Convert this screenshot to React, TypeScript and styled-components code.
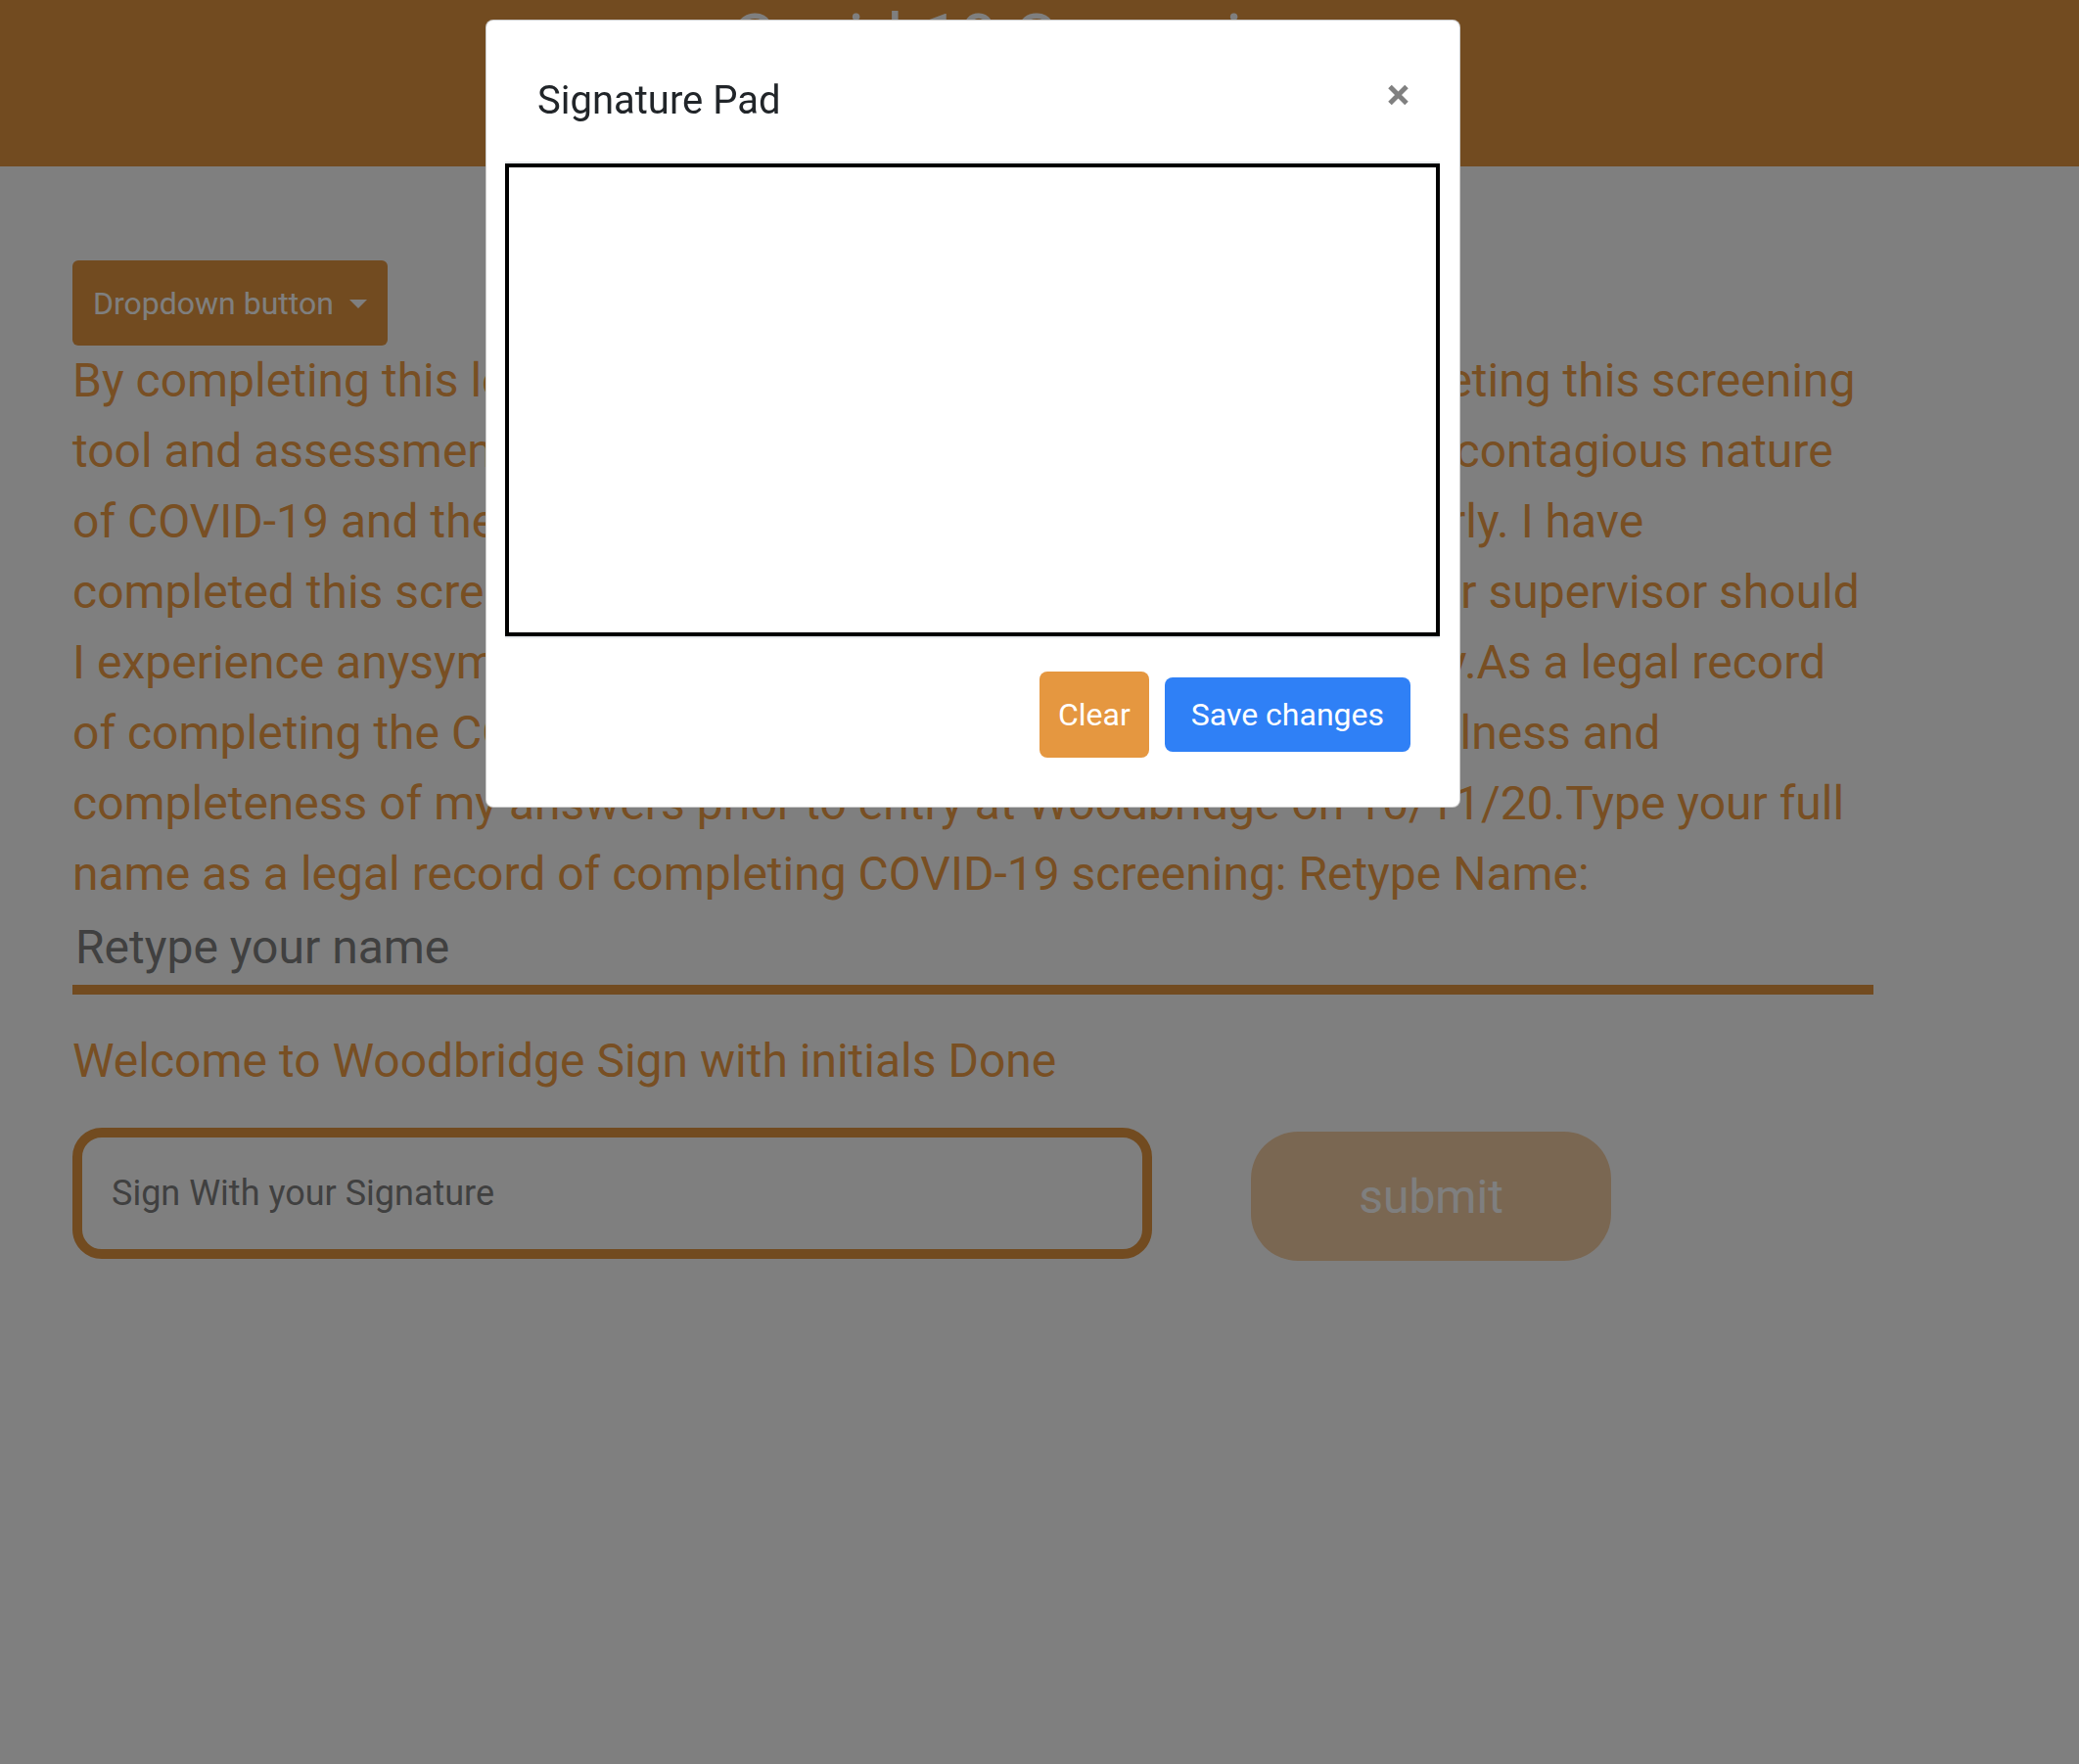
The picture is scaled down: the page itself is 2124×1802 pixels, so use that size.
import React from "react";
import styled, { createGlobalStyle } from "styled-components";

const ORANGE = "#e59740";
const TEXT_ORANGE = "#f09e47";

const GlobalStyle = createGlobalStyle`
  *, *::before, *::after { box-sizing: border-box; }
  html, body { margin: 0; padding: 0; background: #ffffff; }
  body { font-family: Roboto, "Liberation Sans", Arial, sans-serif; }
`;

const Page = styled.div`
  width: 100%;
  min-height: 1802px;
  background: #ffffff;
`;

const Header = styled.header`
  height: 170px;
  background: ${ORANGE};
  display: flex;
  justify-content: center;
  align-items: flex-start;
  padding-right: 30px;
`;

const HeaderTitle = styled.h1`
  margin: 0;
  font-size: 70px;
  line-height: 1.15;
  font-weight: 400;
  color: #ffffff;
`;

const Content = styled.main`
  width: 1840px;
  margin-left: 74px;
  padding-top: 96px;
  display: flex;
  flex-direction: column;
  align-items: flex-start;
`;

const DropdownButton = styled.button`
  height: 87px;
  padding: 0 21px;
  border: 0;
  border-radius: 6px;
  background: ${ORANGE};
  color: #ffffff;
  font-family: Roboto, sans-serif;
  font-size: 32px;
  line-height: 48px;
  display: flex;
  align-items: center;
  &::after {
    content: "";
    display: block;
    margin-left: 16px;
    margin-top: 2px;
    border-top: 9px solid #ffffff;
    border-left: 9px solid transparent;
    border-right: 9px solid transparent;
  }
`;

const Statement = styled.p`
  margin: 0;
  font-size: 48px;
  line-height: 72px;
  color: ${TEXT_ORANGE};
  white-space: nowrap;
`;

const NameInput = styled.input`
  width: 100%;
  height: 87px;
  border: 0;
  border-bottom: 10px solid ${ORANGE};
  background: transparent;
  padding: 0 3px;
  font-family: Roboto, sans-serif;
  font-size: 48px;
  color: #333;
  outline: none;
  &::placeholder { color: #808080; opacity: 1; }
`;

const Welcome = styled.div`
  margin-top: 32px;
  font-size: 48px;
  line-height: 72px;
  color: ${TEXT_ORANGE};
`;

const SignRow = styled.div`
  margin-top: 32px;
  display: flex;
  align-items: flex-start;
  gap: 101px;
`;

const SignInput = styled.input`
  width: 1103px;
  height: 134px;
  border: 10px solid ${ORANGE};
  border-radius: 30px;
  background: transparent;
  padding: 0 0 0 30px;
  font-family: Roboto, sans-serif;
  font-size: 36px;
  outline: none;
  &::placeholder { color: #808080; opacity: 1; }
`;

const SubmitButton = styled.button`
  margin-top: 4px;
  width: 368px;
  height: 132px;
  border: 0;
  border-radius: 48px;
  background: #f5cfa5;
  color: #ffffff;
  font-family: Roboto, sans-serif;
  font-size: 48px;
`;

const Backdrop = styled.div`
  position: fixed;
  inset: 0;
  background: rgba(0, 0, 0, 0.5);
`;

const ModalLayer = styled.div`
  position: fixed;
  inset: 0;
  display: flex;
  align-items: flex-start;
`;

const Dialog = styled.div`
  margin: 20px 0 0 496px;
  width: 996px;
  background: #ffffff;
  border: 1px solid rgba(0, 0, 0, 0.2);
  border-radius: 8px;
  display: flex;
  flex-direction: column;
`;

const ModalHeader = styled.div`
  display: flex;
  justify-content: space-between;
  align-items: flex-start;
  padding: 52px 51px 32px 52px;
`;

const ModalTitle = styled.h5`
  margin: 0;
  font-size: 40px;
  line-height: 60px;
  font-weight: 400;
  color: #212529;
`;

const CloseButton = styled.button`
  margin-top: 13px;
  padding: 0;
  border: 0;
  background: transparent;
  display: block;
  line-height: 0;
  color: #808080;
`;

const ModalBody = styled.div`
  padding: 2px 20px 0 19px;
`;

const SignatureCanvas = styled.div`
  height: 483px;
  border: 4px solid #000000;
  background: #ffffff;
  box-shadow: 0 -2px 0 #e9ecef, 0 2px 0 #e9ecef;
`;

const ModalFooter = styled.div`
  display: flex;
  justify-content: flex-end;
  align-items: center;
  gap: 16px;
  padding: 36px 50px 50px;
`;

const FooterButton = styled.button<{ $variant: "clear" | "save" }>`
  border: 0;
  border-radius: 8px;
  color: #ffffff;
  font-family: Roboto, sans-serif;
  font-size: 32px;
  background: ${(p) => (p.$variant === "clear" ? ORANGE : "#2f80f6")};
  height: ${(p) => (p.$variant === "clear" ? "88px" : "76px")};
  padding: ${(p) => (p.$variant === "clear" ? "0 19px" : "0 27px")};
`;

export default function App() {
  return (
    <>
      <GlobalStyle />
      <Page>
        <Header>
          <HeaderTitle>Covid-19 Screening</HeaderTitle>
        </Header>
        <Content>
          <DropdownButton type="button">Dropdown button</DropdownButton>
          <Statement>
            By completing this legal record, I attest that I am accurately completing this screening
            <br />
            tool and assessment, I have read, and I truly understand the highly contagious nature
            <br />
            of COVID-19 and the importance for reporting all my symptoms early. I have
            <br />
            completed this screening truthfully and I shall notify my manager or supervisor should
            <br />
            I experience anysymptoms while working at the home facility today.As a legal record
            <br />
            of completing the COVID-19 screening I hereby attest to the truthfulness and
            <br />
            completeness of my answers prior to entry at Woodbridge on 10/11/20.Type your full
            <br />
            name as a legal record of completing COVID-19 screening: Retype Name:
          </Statement>
          <NameInput placeholder="Retype your name" />
          <Welcome>Welcome to Woodbridge Sign with initials Done</Welcome>
          <SignRow>
            <SignInput placeholder="Sign With your Signature" />
            <SubmitButton type="button">submit</SubmitButton>
          </SignRow>
        </Content>
      </Page>
      <Backdrop />
      <ModalLayer>
        <Dialog role="dialog">
          <ModalHeader>
            <ModalTitle>Signature Pad</ModalTitle>
            <CloseButton type="button" aria-label="Close">
              <svg width="23" height="22" viewBox="0 0 23 22">
                <path d="M3 2.5 L20 19.5 M20 2.5 L3 19.5" stroke="currentColor" strokeWidth="5" />
              </svg>
            </CloseButton>
          </ModalHeader>
          <ModalBody>
            <SignatureCanvas />
          </ModalBody>
          <ModalFooter>
            <FooterButton $variant="clear" type="button">Clear</FooterButton>
            <FooterButton $variant="save" type="button">Save changes</FooterButton>
          </ModalFooter>
        </Dialog>
      </ModalLayer>
    </>
  );
}
